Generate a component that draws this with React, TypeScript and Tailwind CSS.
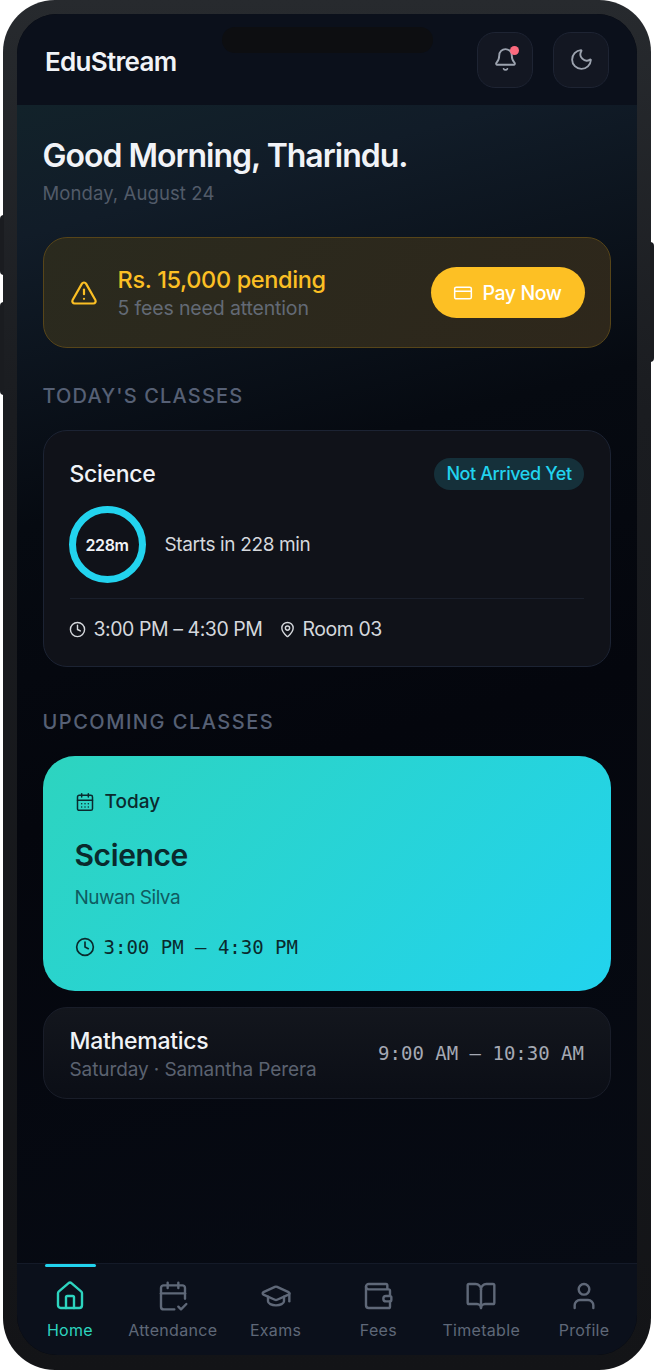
import React from "react";
import { Bell, Moon, TriangleAlert, CreditCard, Clock, MapPin, CalendarDays, House, CalendarCheck2, GraduationCap, Wallet, BookOpen, User } from "lucide-react";

const nav = [
  { label: "Home", Icon: House, active: true },
  { label: "Attendance", Icon: CalendarCheck2 },
  { label: "Exams", Icon: GraduationCap },
  { label: "Fees", Icon: Wallet },
  { label: "Timetable", Icon: BookOpen },
  { label: "Profile", Icon: User },
];

export default function App() {
  return (
    <div className="relative w-[654px] h-[1370px] bg-white overflow-hidden font-['Inter',sans-serif]">
      <div className="absolute left-0 top-[215px] w-[4px] h-[60px] bg-[#1a1c20] rounded-l" />
      <div className="absolute left-0 top-[302px] w-[4px] h-[93px] bg-[#1a1c20] rounded-l" />
      <div className="absolute right-0 top-[242px] w-[4px] h-[120px] bg-[#1a1c20] rounded-r" />
      <div className="ml-[3px] w-[648px] h-[1370px] rounded-[52px] bg-[linear-gradient(180deg,#272a2e_0%,#1a1c20_30%,#131417_100%)] pl-[14px] pr-[14px] pt-[14px]">
        <div className="relative w-[620px] h-[1341px] rounded-[40px] overflow-hidden bg-[#05070e] flex flex-col">
          <div className="absolute left-[205px] top-[13px] w-[211px] h-[26px] rounded-full bg-[#0d0e11]" />
          <header className="h-[91px] shrink-0 bg-[#0b101b] flex items-center justify-between pl-[28px] pr-[28px]">
            <div className="mt-[3px] text-[26px] font-semibold text-[#f1f3f7] tracking-[-0.7px]">EduStream</div>
            <div className="flex gap-[20px]">
              <button className="relative w-[56px] h-[56px] rounded-[18px] bg-[#131722] border border-[#1e2433] flex items-center justify-center">
                <Bell size={25} strokeWidth={1.8} className="text-[#9ca3af]" />
                <span className="absolute right-[13px] top-[13px] w-[9px] h-[9px] rounded-full bg-[#fb6a7e]" />
              </button>
              <button className="w-[56px] h-[56px] rounded-[18px] bg-[#131722] border border-[#1e2433] flex items-center justify-center">
                <Moon size={25} strokeWidth={1.8} className="text-[#9ca3af]" />
              </button>
            </div>
          </header>
          <main className="flex-1 flex flex-col pl-[25.5px] pr-[26px] pt-[32px] bg-[linear-gradient(165deg,#12222a_0%,#111c28_10%,#060a11_32%,#04060d_55%,#070b14_100%)]">
            <h1 className="text-[32px] leading-[38px] font-semibold text-[#f1f3f7] tracking-[-1px]">Good Morning, Tharindu.</h1>
            <p className="text-[18.5px] leading-[26px] mt-[5px] text-[#525b69] tracking-[0.1px]">Monday, August 24</p>

            <section className="mt-[31px] h-[111px] rounded-[24px] border border-[#574519] bg-[linear-gradient(135deg,#2a2a1e,#2e271b)] flex items-center pl-[26px] pr-[25.5px]">
              <TriangleAlert size={28} strokeWidth={1.9} className="text-[#fbbf24] shrink-0" />
              <div className="ml-[20px] flex-1">
                <div className="mt-[1px] text-[23.5px] leading-[29px] font-medium text-[#fbbf24] tracking-[-0.35px]">Rs. 15,000 pending</div>
                <div className="mt-[1px] text-[19.5px] leading-[27px] text-[#636a75] tracking-[-0.15px]">5 fees need attention</div>
              </div>
              <button className="w-[154px] h-[51px] rounded-full bg-[#fdc024] flex items-center justify-center gap-[9px] text-white text-[19.5px] font-medium tracking-[-0.4px]">
                <CreditCard size={20} strokeWidth={1.8} />
                <span className="mt-[3px]">Pay Now</span>
              </button>
            </section>

            <h2 className="mt-[34px] text-[20px] leading-[28px] font-medium text-[#566075] tracking-[1.15px]">TODAY'S CLASSES</h2>

            <section className="mt-[20px] h-[237px] rounded-[24px] border border-[#1c2333] bg-[#101219] px-[26px] pt-[27px]">
              <div className="flex items-center justify-between">
                <div className="text-[23px] leading-[32px] font-medium text-[#f1f3f7] tracking-[-0.3px]">Science</div>
                <span className="-mt-[1px] h-[32px] w-[150px] rounded-full bg-[#15303a] flex items-center justify-center text-[18px] font-medium text-[#22d3ee] tracking-[-0.4px]">Not Arrived Yet</span>
              </div>
              <div className="mt-[16px] -ml-[1px] flex items-center gap-[19px]">
                <div className="w-[77px] h-[77px] rounded-full border-[7px] border-[#22d3ee] flex items-center justify-center text-[16px] font-semibold text-[#f1f3f7] tracking-[-0.4px]">228m</div>
                <div className="mt-[1px] text-[19px] text-[#d5d8dd] tracking-[-0.35px]">Starts in 228 min</div>
              </div>
              <div className="mt-[15px] border-t border-[#1a1f2b] pt-[16px] flex items-center text-[19.5px] leading-[28px] text-[#d5d8dd] tracking-[-0.45px]">
                <Clock size={17} strokeWidth={2} className="-ml-[1px] mr-[8px]" />
                3:00 PM – 4:30 PM
                <MapPin size={17} strokeWidth={2} className="ml-[16px] mr-[7px]" />
                Room 03
              </div>
            </section>

            <h2 className="mt-[41px] text-[20px] leading-[28px] font-medium text-[#566075] tracking-[1.5px]">UPCOMING CLASSES</h2>

            <section className="mt-[20px] h-[235px] rounded-[32px] bg-[linear-gradient(135deg,#2dd4bf_0%,#22d3ee_100%)] px-[32px] pt-[32px] text-[#07302f]">
              <div className="flex items-center gap-[10px] text-[19px] leading-[28px] font-medium text-[#0b2a2e]">
                <CalendarDays size={20} strokeWidth={1.8} />
                Today
              </div>
              <div className="mt-[20px] text-[30px] leading-[38px] font-semibold text-[#0a2a2d] tracking-[-0.4px]">Science</div>
              <div className="mt-[11px] text-[19px] leading-[26px] text-[#0f5c61] tracking-[-0.5px]">Nuwan Silva</div>
              <div className="mt-[22px] flex items-center gap-[9px] text-[19px] leading-[28px] text-[#0a2a2d] font-['DejaVu_Sans_Mono',monospace]">
                <Clock size={20} strokeWidth={2} className="text-[#0a2a2d]" />
                3:00 PM – 4:30 PM
              </div>
            </section>

            <section className="mt-[16px] h-[92px] rounded-[24px] border border-[#191d29] bg-[linear-gradient(180deg,#13161d,#0b0e16)] px-[26px] pt-[4px] flex items-center justify-between">
              <div>
                <div className="text-[23px] leading-[28px] font-medium text-[#f1f3f7] tracking-[-0.3px]">Mathematics</div>
                <div className="mt-[2px] text-[19px] leading-[26px] text-[#5b6270] tracking-[-0.1px]">Saturday · Samantha Perera</div>
              </div>
              <div className="-mt-[4px] text-[19px] text-[#a5a9b3] font-['DejaVu_Sans_Mono',monospace]">9:00 AM – 10:30 AM</div>
            </section>
          </main>
          <nav className="h-[92px] shrink-0 bg-[#0b101b] border-t border-[#141a28] grid grid-cols-6 px-[1.5px]">
            {nav.map(({ label, Icon, active }) => (
              <div key={label} className="relative flex flex-col items-center pt-[16px]">
                {active && <span className="absolute top-0 left-[26px] w-[51px] h-[3px] rounded-full bg-[#22d3ee]" />}
                <Icon size={32} strokeWidth={1.8} className={active ? "text-[#2dd4bf]" : "text-[#5f6878]"} />
                <span className={"mt-[7px] text-[16px] leading-[22px] tracking-[0.3px] whitespace-nowrap " + (active ? "text-[#2dd4bf]" : "text-[#5f6878]")}>{label}</span>
              </div>
            ))}
          </nav>
        </div>
      </div>
    </div>
  );
}
